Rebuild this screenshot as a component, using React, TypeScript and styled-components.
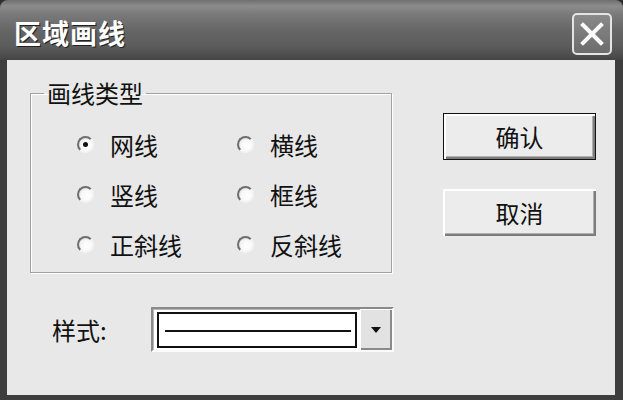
import React from "react";
import styled, { createGlobalStyle } from "styled-components";

const Global = createGlobalStyle`
  html, body { margin: 0; padding: 0; background: #2e2e2e; }
  body { font-family: "Noto Sans CJK SC", "Noto Sans", sans-serif; }
  #root { width: 623px; height: 400px; }
`;

const Window = styled.div`
  width: 623px;
  height: 400px;
  display: flex;
  flex-direction: column;
  background: #3e3e3e;
  border-radius: 8px 8px 0 0;
  overflow: hidden;
`;

const TitleBar = styled.div`
  height: 60px;
  flex: none;
  display: flex;
  align-items: center;
  justify-content: space-between;
  padding: 8px 11px 0 14px;
  box-sizing: border-box;
  background: linear-gradient(
    to bottom,
    #6f6f6f 0px,
    #8c8c8c 6px,
    #7a7a7a 14px,
    #666 30px,
    #5c5c5c 46px,
    #4c4c4c 56px,
    #444 60px
  );
`;

const Title = styled.span`
  color: #fff;
  font-size: 27px;
  font-weight: 700;
  letter-spacing: 1px;
  line-height: 1;
  margin-top: -4px;
  text-shadow: 1px 1px 0 #222;
`;

const CloseButton = styled.div`
  width: 40px;
  height: 42px;
  box-sizing: border-box;
  border: 2px solid #e4e4e4;
  border-radius: 5px;
  background: linear-gradient(to bottom, #8a8a8a, #6c6c6c);
  display: flex;
  align-items: center;
  justify-content: center;
`;

const Body = styled.div`
  flex: 1;
  margin: 0 8px 5px 7px;
  background: #e8e8e8;
  padding: 21px 0 0 23px;
  display: flex;
  flex-direction: column;
`;

const TopRow = styled.div`
  display: flex;
  align-items: flex-start;
`;

const Group = styled.fieldset`
  width: 362px;
  height: 192px;
  box-sizing: border-box;
  margin: 0;
  padding: 14px 0 0 0;
  border: 1px solid #a2a2a2;
  box-shadow: 1px 1px 0 #fff, inset 1px 1px 0 #fff;
  min-inline-size: 0;
`;

const Legend = styled.legend`
  margin-left: 13px;
  padding: 0 3px;
  font-size: 24px;
  line-height: 24px;
  color: #111;
`;

const RadioGrid = styled.div`
  display: grid;
  grid-template-columns: 160px 1fr;
  grid-auto-rows: 50px;
  padding-left: 46px;
`;

const RadioItem = styled.label`
  display: flex;
  align-items: center;
  gap: 16px;
  font-size: 24px;
  color: #111;
`;

const RadioCircle = styled.span<{ $checked?: boolean }>`
  width: 17px;
  height: 17px;
  box-sizing: border-box;
  border-radius: 50%;
  border: 2px solid;
  border-color: #6e6e6e #f4f4f4 #f4f4f4 #6e6e6e;
  background: radial-gradient(circle at 62% 62%, #ffffff 0%, #f8f8f8 50%, #d6d6d6 100%);
  display: flex;
  align-items: center;
  justify-content: center;
  flex: none;
  &::after {
    content: "";
    width: 5px;
    height: 5px;
    border-radius: 50%;
    background: #111;
    display: ${(p) => (p.$checked ? "block" : "none")};
  }
`;

const ButtonColumn = styled.div`
  display: flex;
  flex-direction: column;
  gap: 29px;
  margin: 32px 0 0 51px;
`;

const Button = styled.div<{ $default?: boolean }>`
  width: 153px;
  height: 47px;
  box-sizing: border-box;
  display: flex;
  align-items: center;
  justify-content: center;
  font-size: 24px;
  color: #111;
  background: #ececec;
  border: ${(p) => (p.$default ? "1px solid #111" : "0")};
  box-shadow: inset 2px 2px 0 #fff, inset -2px -2px 0 #7c7c7c, inset -3px -3px 0 #b0b0b0;
`;

const StyleRow = styled.div`
  display: flex;
  align-items: center;
  margin-top: 34px;
  padding-left: 22px;
`;

const StyleLabel = styled.span`
  font-size: 24px;
  color: #111;
  width: 99px;
`;

const Combo = styled.div`
  width: 243px;
  height: 45px;
  box-sizing: border-box;
  display: flex;
  align-items: stretch;
  background: #fff;
  border: 2px solid;
  border-color: #8a8a8a #fbfbfb #fbfbfb #8a8a8a;
  box-shadow: inset 1px 1px 0 #b8b8b8;
  padding: 3px 0 2px 4px;
`;

const ComboValue = styled.div`
  flex: 1;
  border: 2px solid #111;
  display: flex;
  align-items: center;
  padding: 0 4px 0 6px;
  margin-right: 3px;
`;

const LineSample = styled.div`
  height: 2px;
  width: 100%;
  background: #111;
  margin-top: 1px;
`;

const ArrowButton = styled.div`
  width: 32px;
  margin: -3px 0 -2px 0;
  background: #e2e2e2;
  box-shadow: inset 1px 1px 0 #fff, inset -2px -2px 0 #8a8a8a;
  display: flex;
  align-items: center;
  justify-content: center;
`;

const radios = [
  ["网线", true],
  ["横线", false],
  ["竖线", false],
  ["框线", false],
  ["正斜线", false],
  ["反斜线", false],
] as const;

export default function App() {
  return (
    <>
      <Global />
      <Window>
        <TitleBar>
          <Title>区域画线</Title>
          <CloseButton>
            <svg width="26" height="26" viewBox="0 0 26 26">
              <path d="M4 4 L22 22 M22 4 L4 22" stroke="#fafafa" strokeWidth="4" strokeLinecap="square" />
            </svg>
          </CloseButton>
        </TitleBar>
        <Body>
          <TopRow>
            <Group>
              <Legend>画线类型</Legend>
              <RadioGrid>
                {radios.map(([label, checked]) => (
                  <RadioItem key={label}>
                    <RadioCircle $checked={checked} />
                    {label}
                  </RadioItem>
                ))}
              </RadioGrid>
            </Group>
            <ButtonColumn>
              <Button $default>确认</Button>
              <Button>取消</Button>
            </ButtonColumn>
          </TopRow>
          <StyleRow>
            <StyleLabel>样式:</StyleLabel>
            <Combo>
              <ComboValue>
                <LineSample />
              </ComboValue>
              <ArrowButton>
                <svg width="10" height="6" viewBox="0 0 10 6">
                  <path d="M0 0 H10 L5 6 Z" fill="#111" />
                </svg>
              </ArrowButton>
            </Combo>
          </StyleRow>
        </Body>
      </Window>
    </>
  );
}
